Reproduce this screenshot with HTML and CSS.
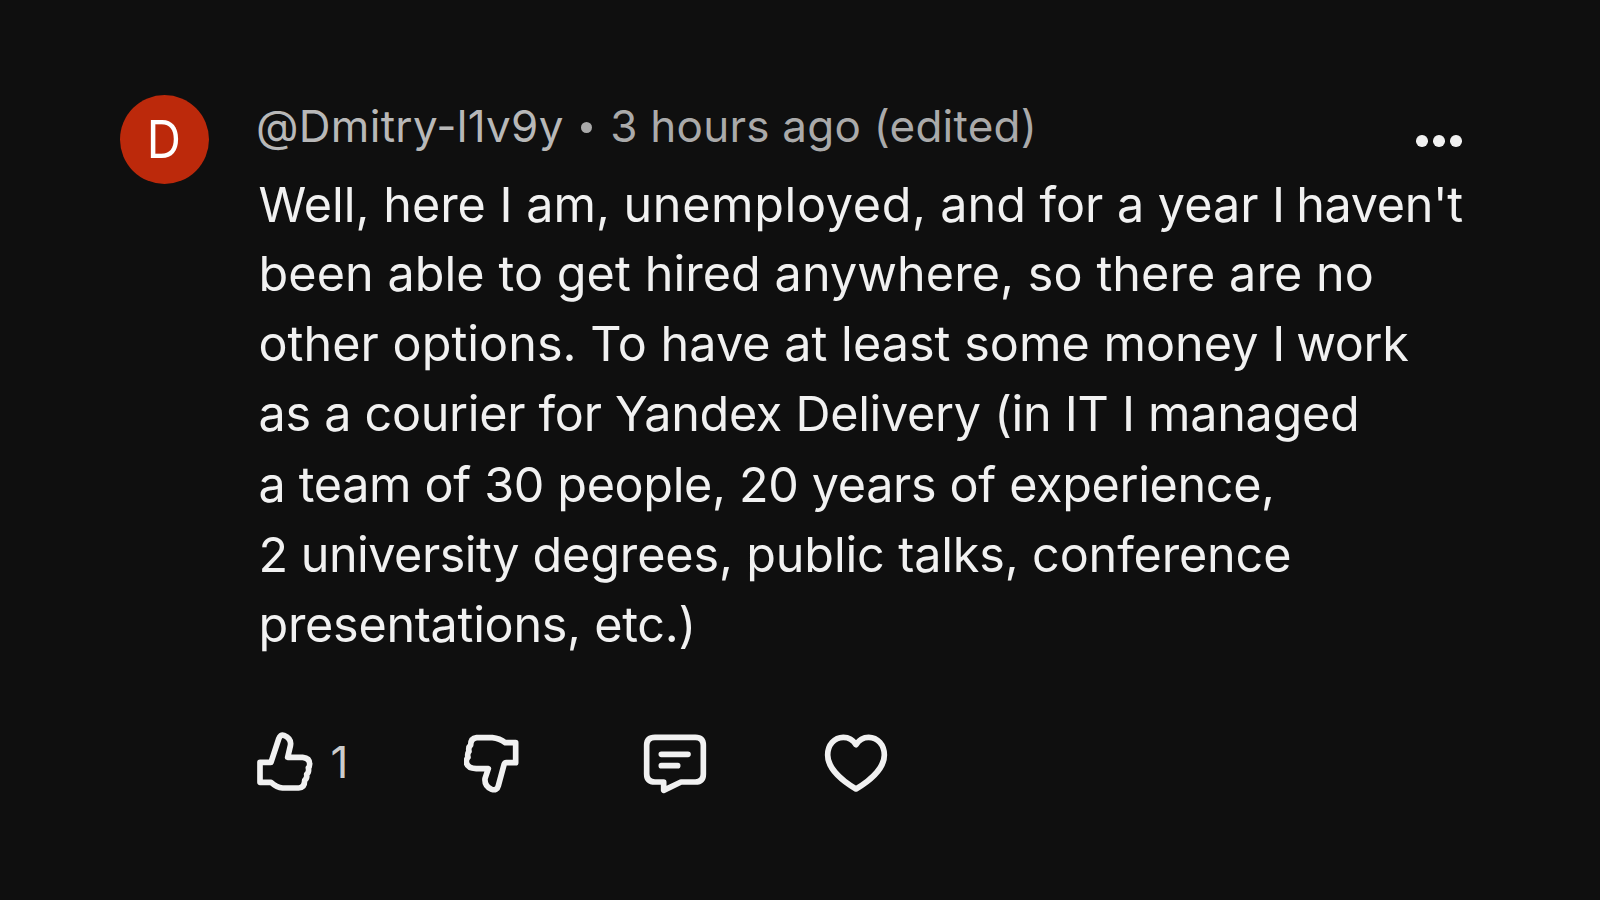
FILE: index.html
```html
<!DOCTYPE html>
<html lang="en">
<head>
<meta charset="utf-8">
<title>Comment</title>
<link rel="stylesheet" href="styles.css">
</head>
<body>
<article class="comment">
  <div class="avatar"><span class="initial">D</span></div>
  <div class="main">
    <header class="head">
      <div class="meta"><span class="author">@Dmitry-l1v9y</span><span class="dot"></span><span class="time">3 hours ago (edited)</span></div>
      <div class="more"><i></i><i></i><i></i></div>
    </header>
    <div class="text">
      <p class="l1">Well, here I am, <span class="wide">unemployed,</span> and for a year <span class="tight">I haven't</span></p>
      <p class="l2">been able to get hired anywhere, so there are no</p>
      <p class="l3">other options. To have at least some money <span class="tight">I work</span></p>
      <p class="l4">as a courier for Yandex Delivery (in IT I managed</p>
      <p class="l5">a team of 30 people, 20 years of experience,</p>
      <p class="l6"><span class="narrow">2 university</span> degrees, public talks, conference</p>
      <p class="l7">presentations, etc.)</p>
    </div>
    <div class="actions">
      <svg class="icon up" viewBox="0 0 180 192"><path d="M12 97H45L68 27Q73 12 84 16Q108 26 103 48L95 82H140Q161 84 161 102Q161 110 157 113Q160 127 152 133Q154 145 146 151Q146 174 128 174H80Q62 172 45 157H12Z"/></svg>
      <span class="count">1</span>
      <svg class="icon down" viewBox="0 0 180 192"><path d="M38 23H85Q107 25 124 38H155V98H127Q122 98 120 104L103 167Q99 183 83 178Q61 169 63 146L73 116H37Q7 114 7 94Q7 87 12 82Q9 71 15 64Q12 52 20 45Q20 25 38 23Z"/></svg>
      <svg class="icon reply" viewBox="0 0 192 192"><path d="M36 22H157Q181 22 181 46V132Q181 156 157 156H114L62 181V156H36Q11 156 11 132V46Q11 22 36 22ZM55 73H135M55 107H104"/></svg>
      <svg class="icon heart" viewBox="0 0 192 192"><path d="M96 44C83 23 68 22 58 22C31 22 11 45 11 75C11 108 42 145 96 177C150 145 181 108 181 75C181 45 161 22 134 22C124 22 109 23 96 44Z"/></svg>
    </div>
  </div>
</article>
</body>
</html>
```
FILE: styles.css
```css
body {
  margin: 0;
  background: #0f0f0f;
  color: #f1f1f1;
  font-family: Inter, "Liberation Sans", sans-serif;
}
.comment {
  display: flex;
  box-sizing: border-box;
  width: 1600px;
  height: 900px;
  padding: 95px 138px 0 120px;
  overflow: hidden;
}
.avatar {
  flex: none;
  width: 89px;
  height: 89px;
  border-radius: 50%;
  background: #bc290b;
  color: #fff;
  font-size: 52px;
  line-height: 90px;
  text-align: center;
}
.initial {
  display: inline-block;
  margin-left: -2px;
  transform: scaleX(.91);
}
.main {
  width: 1206px;
  margin-left: 47px;
}
.head {
  display: flex;
  justify-content: space-between;
  height: 75px;
}
.meta {
  display: flex;
  align-items: center;
  height: 62px;
  font-size: 44px;
  color: #aaa;
  white-space: nowrap;
}
.author { color: #b8b8b8; letter-spacing: .3px; }
.time { letter-spacing: .24px; }
.dot {
  width: 11px;
  height: 11px;
  margin: 2px 18.5px 0 17px;
  border-radius: 50%;
  background: #aaa;
}
.more {
  display: flex;
  gap: 5.5px;
  padding-top: 40px;
}
.more i {
  width: 11.6px;
  height: 11.6px;
  border-radius: 50%;
  background: #f1f1f1;
}
.text {
  padding-left: 2.5px;
  font-size: 48.5px;
  line-height: 70px;
  white-space: nowrap;
}
.text p { margin: 0; width: max-content; }
.text .l1 { height: 69px; }
.wide { letter-spacing: .65px; }
.tight { letter-spacing: -.3px; word-spacing: -2px; }
.l2 { letter-spacing: .08px; }
.l3 { letter-spacing: .04px; }
.text .l4 { height: 71px; letter-spacing: -.28px; }
.l5 { letter-spacing: -.34px; }
.l6 { letter-spacing: -.14px; }
.narrow { letter-spacing: -.5px; }
.l7 { letter-spacing: -.28px; }
.actions {
  display: flex;
  align-items: center;
  height: 64px;
  margin-top: 70px;
}
.icon {
  flex: none;
  height: 64px;
  fill: none;
  stroke: #f1f1f1;
  stroke-width: 17;
  stroke-linejoin: round;
  stroke-linecap: round;
}
.up, .down { width: 60px; }
.up { margin-left: -.5px; }
.reply, .heart { width: 64px; }
.count {
  width: 60px;
  margin: -1px 0 0 15px;
  font-size: 44px;
  color: #ccc;
}
.down { margin-left: 73.5px; }
.reply { margin-left: 119px; }
.heart { margin-left: 117px; }
```
